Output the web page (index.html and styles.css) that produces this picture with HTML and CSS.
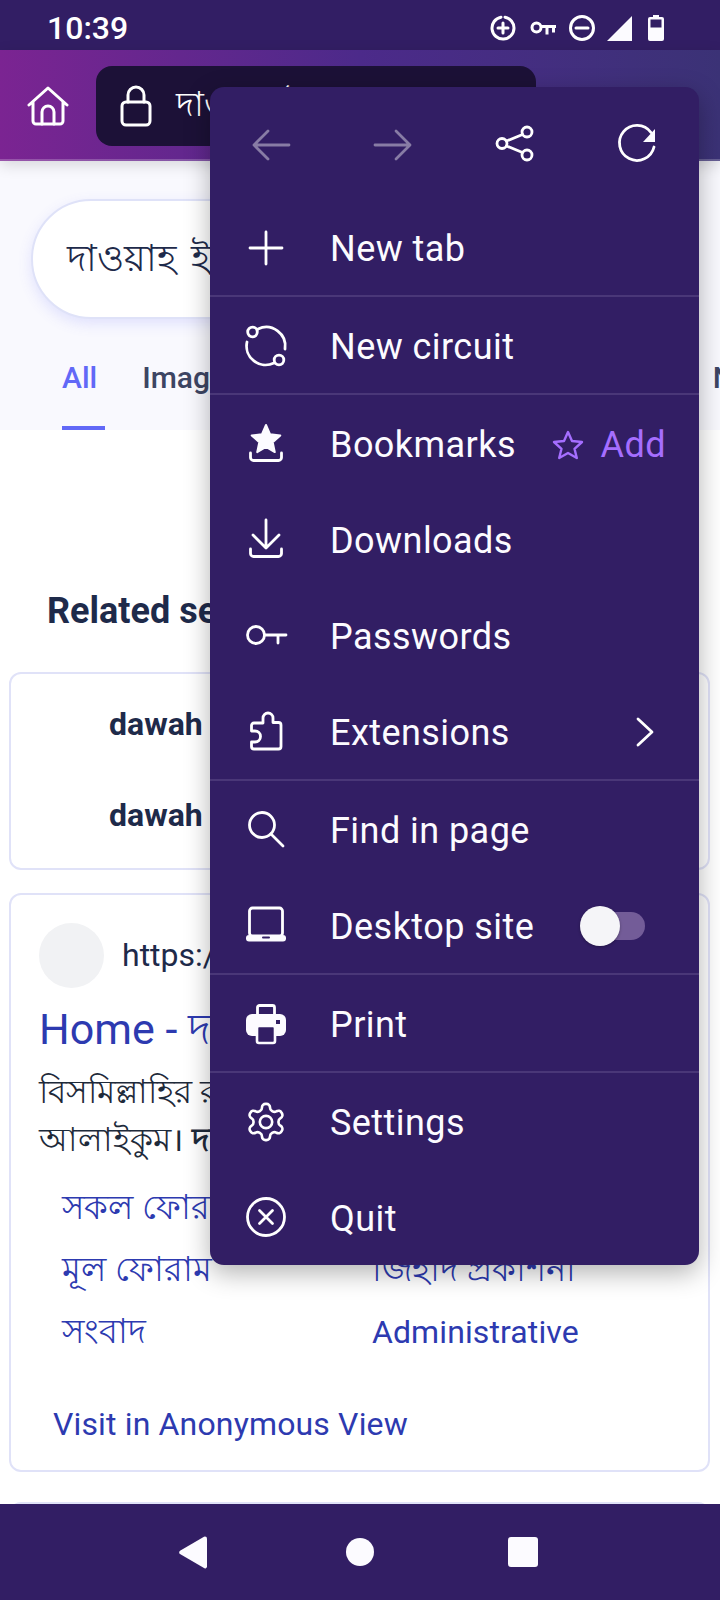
FILE: index.html
```html
<!DOCTYPE html>
<html lang="en">
<head>
    <meta charset="UTF-8">
    <meta name="viewport" content="width=device-width, initial-scale=1.0">
    <title>Search</title>
    <link rel="stylesheet" href="styles.css">
</head>
<body>
<div class="statusbar">
    <span class="clock">10:39</span>
    <div class="status-icons">
        <svg class="st-saver" viewBox="0 0 26 26"><path class="line" d="M11 2.200A11 11 0 1 0 24 13 11 11 0 0 0 15 2.200"/><path class="line" d="M13 8v10M8 13h10"/></svg>
        <svg class="st-key" viewBox="0 0 26 14"><circle class="line" cx="6.500" cy="6.500" r="4.500"/><path class="line thick" d="M11 5.500h15M17 5.500v8M23.500 5.500v6"/></svg>
        <svg class="st-dnd" viewBox="0 0 26 26"><circle class="line" cx="13" cy="13" r="11.500"/><path class="line" d="M7 13h12"/></svg>
        <svg class="st-signal" viewBox="0 0 25 25"><path class="solid" d="M25 0v25H0z"/></svg>
        <svg class="st-batt" viewBox="0 0 16 26"><path class="solid" d="M5 0h6v2h3a2 2 0 0 1 2 2v20a2 2 0 0 1-2 2H2a2 2 0 0 1-2-2V4a2 2 0 0 1 2-2h3z"/><rect class="hole" x="2.500" y="4.500" width="11" height="8"/></svg>
    </div>
</div>

<div class="toolbar">
    <svg class="home-icon" viewBox="0 0 42 40"><path class="line w3" d="M2 19 21 2l19 17M6 16v19a3 3 0 0 0 3 3h24a3 3 0 0 0 3-3V16"/><path class="line w3" d="M15 38V26a6 6 0 0 1 12 0v12"/></svg>
    <div class="urlbar">
        <svg class="lock-icon" viewBox="0 0 32 42"><rect class="line w3" x="2" y="17" width="28" height="23" rx="4"/><path class="line w3" d="M8 17V10a8 8 0 0 1 16 0v7"/></svg>
        <span class="url-text">দাওয়াহ ইলাল্লাহ</span>
    </div>
</div>

<div class="page">
    <div class="search-head">
        <div class="search-box">দাওয়াহ ইলাল্লাহ ফোরাম</div>
        <div class="tabs">
            <span class="tab active">All</span>
            <span class="tab">Images</span>
            <span class="tab">Videos</span>
            <span class="tab">Maps</span>
            <span class="tab">Shopping</span>
            <span class="tab last-tab">News</span>
        </div>
    </div>

    <div class="results">
        <h2 class="related-title">Related searches</h2>
        <div class="card related">
            <div class="related-row">dawah ilallah forum</div>
            <div class="related-row">dawah ilallah bangla</div>
        </div>

        <div class="card result">
            <div class="site-row">
                <div class="favicon"></div>
                <span class="site-url">https://dawahilallah.com</span>
            </div>
            <div class="result-title">Home - দাওয়াহ ইলাল্লাহ</div>
            <p class="snippet">বিসমিল্লাহির রহমানির রহিম। আসসালামু<br>আলাইকুম। <b>দাওয়াহ ইলাল্লাহ</b> ফোরামে স্বাগতম</p>
            <div class="sitelinks">
                <span class="bn">সকল ফোরাম</span><span class="bn">নীতিমালা</span>
                <span class="bn">মূল ফোরাম</span><span class="bn">জিহাদ প্রকাশনী</span>
                <span class="bn">সংবাদ</span><span>Administrative</span>
            </div>
            <div class="visit">Visit in Anonymous View</div>
        </div>

        <div class="card next-card"></div>
    </div>
</div>

<div class="navbar">
    <svg class="nav-back" viewBox="0 0 28 33"><path class="solid" d="M26 .5a2 2 0 0 1 2 2v28a2 2 0 0 1-3 1.600L1 18a2 2 0 0 1 0-3.200L25 .8z"/></svg>
    <div class="nav-home"></div>
    <div class="nav-recent"></div>
</div>

<div class="menu">
    <div class="menu-top">
        <svg class="icon dim" viewBox="0 0 40 40"><path class="line" d="M38 19H3M17 5 3 19l14 14"/></svg>
        <svg class="icon dim" viewBox="0 0 40 40"><path class="line" d="M2 19h35M23 5l14 14-14 14"/></svg>
        <svg class="icon" viewBox="0 0 40 40"><circle class="line" cx="32" cy="6" r="5"/><circle class="line" cx="7" cy="17.500" r="5"/><circle class="line" cx="32" cy="29" r="5"/><path class="line" d="M27.500 8.500 11.500 15M11.500 20l16 6.500"/></svg>
        <svg class="icon" viewBox="0 0 40 40"><path class="line" d="M34 6.500A17.500 17.500 0 1 0 37 21"/><path class="solid" d="M38 3v13H26z"/></svg>
    </div>

    <div class="menu-group">
        <div class="menu-item">
            <svg class="icon" viewBox="0 0 40 40"><path class="line" d="M20 4v32M4 20h32"/></svg>
            <span>New tab</span>
        </div>
    </div>

    <div class="menu-group">
        <div class="menu-item">
            <svg class="icon" viewBox="0 0 40 40"><circle class="line" cx="6.500" cy="6" r="4.800"/><circle class="line" cx="33" cy="34" r="4.800"/><path class="line" d="M12 3A19 19 0 0 1 39 23"/><path class="line" d="M28 37A19 19 0 0 1 1 16"/></svg>
            <span>New circuit</span>
        </div>
    </div>

    <div class="menu-group">
        <div class="menu-item">
            <svg class="icon" viewBox="0 0 40 40"><path class="solid rounded" d="M20 1l4.100 9.300 10.200 1.100-7.600 6.800 2.100 9.900-8.800-5.100-8.800 5.100 2.100-9.900-7.600-6.800 10.200-1.100z"/><path class="line" d="M4.500 29v4.500a3 3 0 0 0 3 3h25a3 3 0 0 0 3-3V29"/></svg>
            <span>Bookmarks</span>
            <span class="add">
                <svg class="add-star" viewBox="0 0 32 30"><path class="line-add" d="M16 2l4 9 10 1-7.500 6.800L24.800 28 16 23l-8.800 5 2.300-9.200L2 12l10-1z"/></svg>
                Add
            </span>
        </div>
        <div class="menu-item">
            <svg class="icon" viewBox="0 0 40 40"><path class="line" d="M20 0v28M7 15l13 13 13-13M4.500 29v4.500a3 3 0 0 0 3 3h25a3 3 0 0 0 3-3V29"/></svg>
            <span>Downloads</span>
        </div>
        <div class="menu-item">
            <svg class="icon" viewBox="0 0 40 40"><circle class="line" cx="10" cy="19" r="8.500"/><path class="line" d="M18.500 19H40M32 19v8"/></svg>
            <span>Passwords</span>
        </div>
        <div class="menu-item">
            <svg class="icon" viewBox="0 0 40 40"><path class="line" d="M17 11V6a5 5 0 0 1 10 0v4.500h5.500a2.500 2.500 0 0 1 2.500 2.500v21.500a2.500 2.500 0 0 1-2.500 2.500H8a2.500 2.500 0 0 1-2.500-2.500V30H9a5.500 5.500 0 0 0 0-11H5.500v-5.500A2.500 2.500 0 0 1 8 11z"/></svg>
            <span>Extensions</span>
            <svg class="chevron" viewBox="0 0 18 30"><path class="line" d="M2 2l14 13L2 28"/></svg>
        </div>
    </div>

    <div class="menu-group">
        <div class="menu-item">
            <svg class="icon" viewBox="0 0 40 40"><circle class="line" cx="16" cy="15" r="12.500"/><path class="line" d="M25 24l12 12"/></svg>
            <span>Find in page</span>
        </div>
        <div class="menu-item">
            <svg class="icon" viewBox="0 0 40 40"><rect class="line" x="3.500" y="2" width="33" height="28" rx="3"/><rect class="solid" x="0" y="29" width="40" height="6.500" rx="3"/><rect class="hole" x="16" y="30.500" width="8" height="2" rx="1"/></svg>
            <span>Desktop site</span>
            <div class="toggle"><div class="toggle-thumb"></div></div>
        </div>
    </div>

    <div class="menu-group">
        <div class="menu-item">
            <svg class="icon" viewBox="0 0 40 40"><path class="line" d="M11.500 10V3.500a2 2 0 0 1 2-2h13a2 2 0 0 1 2 2V10"/><rect class="solid" x="0" y="10" width="40" height="22" rx="6"/><rect class="hole" x="30" y="16" width="4" height="4"/><rect class="paper" x="11" y="22" width="18" height="17" rx="2"/></svg>
            <span>Print</span>
        </div>
    </div>

    <div class="menu-group">
        <div class="menu-item">
            <svg class="icon" viewBox="1 1 22 22"><path class="line thin" d="M12.220 2h-.44a2 2 0 0 0-2 2v.18a2 2 0 0 1-1 1.730l-.43.25a2 2 0 0 1-2 0l-.15-.08a2 2 0 0 0-2.730.73l-.22.38a2 2 0 0 0 .73 2.730l.15.1a2 2 0 0 1 1 1.720v.51a2 2 0 0 1-1 1.740l-.15.09a2 2 0 0 0-.73 2.730l.22.38a2 2 0 0 0 2.730.73l.15-.08a2 2 0 0 1 2 0l.43.25a2 2 0 0 1 1 1.730V20a2 2 0 0 0 2 2h.44a2 2 0 0 0 2-2v-.18a2 2 0 0 1 1-1.730l.43-.25a2 2 0 0 1 2 0l.15.08a2 2 0 0 0 2.730-.73l.22-.39a2 2 0 0 0-.73-2.730l-.15-.08a2 2 0 0 1-1-1.740v-.5a2 2 0 0 1 1-1.740l.15-.09a2 2 0 0 0 .73-2.730l-.22-.38a2 2 0 0 0-2.730-.73l-.15.08a2 2 0 0 1-2 0l-.43-.25a2 2 0 0 1-1-1.730V4a2 2 0 0 0-2-2z"/><circle class="line thin" cx="12" cy="12" r="3.400"/></svg>
            <span>Settings</span>
        </div>
        <div class="menu-item">
            <svg class="icon" viewBox="0 0 40 40"><circle class="line" cx="20" cy="19" r="18.500"/><path class="line" d="M13.500 12.500l13 13M26.500 12.500l-13 13"/></svg>
            <span>Quit</span>
        </div>
    </div>
</div>
</body>
</html>
```

FILE: styles.css
```css
body {
    width: 720px;
    height: 1600px;
    margin: 0;
    overflow: hidden;
    position: relative;
    display: flex;
    flex-direction: column;
    background: #fff;
    font-family: Roboto, "Noto Sans", sans-serif;
}

/* svg helpers */
.line {
    fill: none;
    stroke: #fff;
    stroke-width: 2.8;
    stroke-linecap: round;
    stroke-linejoin: round;
}

.line.thin {
    stroke-width: 1.45;
}

.line.w3 {
    stroke-width: 3;
}

.line.thick {
    stroke-width: 3.4;
    stroke-linecap: butt;
}

.solid {
    fill: #fcfbff;
}

.solid.rounded {
    stroke: #fcfbff;
    stroke-width: 2;
    stroke-linejoin: round;
}

.hole {
    fill: #321e64;
}

.paper {
    fill: #321e64;
    stroke: #fcfbff;
    stroke-width: 2.6;
}

/* status bar */
.statusbar {
    height: 50px;
    flex: none;
    display: flex;
    align-items: center;
    justify-content: space-between;
    padding: 6px 56px 0 47px;
    box-sizing: border-box;
    background: #321e64;
    color: #fff;
}

.clock {
    font-size: 32px;
    font-weight: 500;
}

.status-icons {
    display: flex;
    align-items: center;
}

.status-icons svg {
    display: block;
    overflow: visible;
}

.status-icons .line {
    stroke-width: 3;
}

.st-saver { width: 26px; height: 26px; margin-right: 14px; }
.st-key { width: 26px; height: 14px; margin-right: 13px; }
.st-dnd { width: 26px; height: 26px; margin-right: 12px; }
.st-signal { width: 25px; height: 25px; margin-right: 16px; }
.st-batt { width: 16px; height: 26px; }

/* toolbar */
.toolbar {
    height: 111px;
    flex: none;
    display: flex;
    align-items: flex-start;
    box-sizing: border-box;
    padding-left: 27px;
    background: linear-gradient(90deg, #7b2492 0%, #4c2a8a 50%, #3b3276 100%);
    border-bottom: 2px solid rgba(255, 255, 255, 0.22);
    background-origin: border-box;
    position: relative;
    z-index: 2;
    box-shadow: 0 4px 14px rgba(0, 0, 0, 0.14);
}

.home-icon {
    width: 42px;
    height: 40px;
    margin-top: 36px;
}

.urlbar {
    width: 440px;
    height: 80px;
    margin: 16px 0 0 27px;
    display: flex;
    align-items: center;
    background: #1c1137;
    border-radius: 16px;
    overflow: hidden;
}

.lock-icon {
    width: 32px;
    height: 42px;
    margin-left: 24px;
}

.url-text {
    margin-left: 24px;
    color: #fff;
    font-size: 34px;
    white-space: nowrap;
}

/* page under the menu */
.page {
    flex: 1;
    min-height: 0;
    overflow: hidden;
}

.search-head {
    height: 269px;
    box-sizing: border-box;
    padding-top: 38px;
    background: #f9f9fe;
    overflow: hidden;
}

.search-box {
    width: 656px;
    height: 120px;
    box-sizing: border-box;
    margin-left: 31px;
    padding-left: 34px;
    line-height: 116px;
    font-size: 37px;
    word-spacing: 6px;
    color: #1e2a4a;
    white-space: nowrap;
    background: #fff;
    border: 2px solid #dfe2f8;
    border-radius: 60px;
    box-shadow: 0 5px 14px rgba(98, 105, 247, 0.16);
}

.tabs {
    display: flex;
    gap: 37px;
    padding-left: 62px;
    white-space: nowrap;
}

.tab {
    padding: 40px 8px 29px 0;
    line-height: 38px;
    font-size: 30px;
    font-weight: 500;
    color: #3d4563;
    border-bottom: 4px solid transparent;
}

.tab.last-tab {
    margin-left: -3px;
}

.tab.active {
    color: #6269f7;
    border-bottom-color: #6269f7;
}

.results {
    padding: 0 10px 0 9px;
}

.related-title {
    margin: 161px 0 41px 38px;
    line-height: 40px;
    font-size: 36px;
    font-weight: 700;
    color: #1e2a4a;
    white-space: nowrap;
}

.card {
    border: 2px solid #e0e2f8;
    border-radius: 12px;
    margin-bottom: 30px;
    overflow: hidden;
}

.related {
    height: 198px;
    box-sizing: border-box;
    padding: 5px 0 0 98px;
    margin-bottom: 23px;
}

.related-row {
    height: 91px;
    line-height: 91px;
    font-size: 32px;
    font-weight: 700;
    color: #1e2a4a;
    white-space: nowrap;
}

.result {
    padding: 28px 27px 26px 28px;
}

.next-card {
    height: 100px;
}

.site-row {
    display: flex;
    align-items: center;
}

.favicon {
    width: 65px;
    height: 65px;
    flex: none;
    border-radius: 50%;
    background: #f1f2f4;
}

.site-url {
    margin: -2px 0 0 18px;
    font-size: 32px;
    color: #1e2a4a;
    white-space: nowrap;
}

.result-title {
    margin: 17px 0 15px;
    line-height: 48px;
    font-size: 43px;
    color: #2d3ab0;
    white-space: nowrap;
}

.snippet {
    margin: 0;
    line-height: 48px;
    font-size: 33px;
    color: #1e2a3a;
    white-space: nowrap;
}

.sitelinks {
    display: grid;
    grid-template-columns: 310px 1fr;
    grid-auto-rows: 62px;
    align-items: center;
    margin-top: 13px;
    padding-left: 23px;
    font-size: 32px;
    letter-spacing: 0.1px;
    color: #2d3ab0;
}

.bn {
    padding-top: 3px;
    font-size: 34px;
}

.visit {
    margin: 41px 0 0 14px;
    line-height: 40px;
    font-size: 32px;
    letter-spacing: 0.15px;
    color: #2d3ab0;
}

/* nav bar */
.navbar {
    height: 96px;
    flex: none;
    position: relative;
    z-index: 2;
    display: flex;
    align-items: center;
    background: #321e64;
}

.nav-back {
    width: 28px;
    height: 33px;
    margin-left: 179px;
}

.nav-home {
    width: 28px;
    height: 28px;
    margin-left: 139px;
    border-radius: 50%;
    background: #fcfbff;
}

.nav-recent {
    width: 30px;
    height: 30px;
    margin-left: 134px;
    border-radius: 3px;
    background: #fcfbff;
}

/* overflow menu */
.menu {
    position: absolute;
    top: 87px;
    left: 210px;
    width: 489px;
    height: 1178px;
    z-index: 3;
    background: #321e64;
    border-radius: 14px;
    box-shadow: 0 8px 26px rgba(0, 0, 0, 0.3);
    color: #fcfbff;
    font-size: 36px;
    letter-spacing: 0.45px;
    overflow: hidden;
}

.menu-top {
    height: 112px;
    box-sizing: border-box;
    display: flex;
    gap: 82px;
    padding: 39px 0 0 41px;
}

.icon {
    width: 40px;
    height: 40px;
    flex: none;
    display: block;
    overflow: visible;
}

.icon.dim {
    opacity: 0.42;
}

.menu-group {
    border-bottom: 2px solid #4a3778;
}

.menu-group:last-child {
    border-bottom: none;
}

.menu-item {
    height: 96px;
    box-sizing: border-box;
    display: flex;
    align-items: center;
    padding: 2px 0 0 36px;
}

.menu-item > span:nth-of-type(1) {
    padding-top: 2px;
    white-space: nowrap;
}

.menu-item .icon + span {
    margin-left: 44px;
}

.add {
    margin-left: auto;
    margin-right: 33px;
    padding-top: 2px;
    display: flex;
    align-items: center;
    color: #a56eff;
}

.add-star {
    width: 32px;
    height: 30px;
    margin-right: 17px;
}

.line-add {
    fill: none;
    stroke: #a56eff;
    stroke-width: 2.4;
    stroke-linejoin: round;
}

.chevron {
    width: 18px;
    height: 30px;
    margin-left: auto;
    margin-right: 45px;
}

.toggle {
    position: relative;
    width: 60px;
    height: 28px;
    margin-left: auto;
    margin-right: 54px;
    border-radius: 14px;
    background: #735c98;
}

.toggle-thumb {
    position: absolute;
    top: -6px;
    left: -5px;
    width: 40px;
    height: 40px;
    border-radius: 50%;
    background: #f5f5f8;
    box-shadow: 0 1px 3px rgba(0, 0, 0, 0.3);
}
```
